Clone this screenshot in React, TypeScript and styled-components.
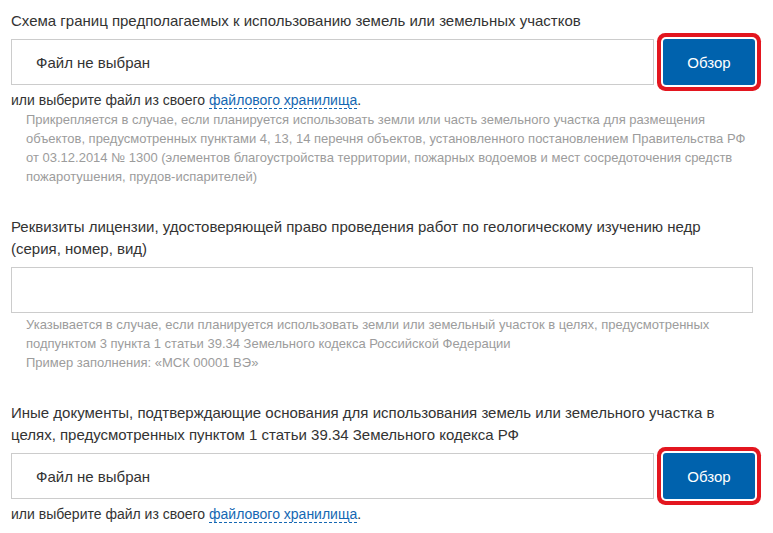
import React from "react";
import styled, { createGlobalStyle } from "styled-components";

const GlobalStyle = createGlobalStyle`
  html, body {
    margin: 0;
    padding: 0;
    background: #ffffff;
  }
  body {
    font-family: "Liberation Sans", Arial, sans-serif;
    color: #333333;
  }
`;

const Page = styled.div`
  width: 744px;
  padding: 10px 0 0 11px;
  display: flex;
  flex-direction: column;
  gap: 30px;
`;

const Field = styled.section`
  display: flex;
  flex-direction: column;
`;

const Label = styled.div`
  font-size: 15px;
  line-height: 22px;
  color: #333333;
`;

const FileRow = styled.div`
  margin-top: 7px;
  display: flex;
  align-items: stretch;
  gap: 9px;
  height: 46px;
`;

const FileBox = styled.div`
  flex: 1;
  box-sizing: border-box;
  border: 1px solid #cccccc;
  display: flex;
  align-items: center;
  padding-left: 24px;
  font-size: 15px;
  color: #333333;
`;

const BrowseButton = styled.button<{ $highlight?: boolean }>`
  width: 92px;
  height: 46px;
  border: none;
  border-radius: 3px;
  background: #0062ad;
  color: #ffffff;
  font-family: "Liberation Sans", Arial, sans-serif;
  font-size: 15px;
  cursor: pointer;
  box-shadow: ${(p) =>
    p.$highlight ? "0 0 0 2px #ffffff, 0 0 0 6px #e3161f" : "none"};
`;

const StorageNote = styled.div`
  margin-top: 5px;
  font-size: 14px;
  line-height: 20px;
  color: #333333;
`;

const StorageLink = styled.a`
  color: #1467b3;
  text-decoration: none;
  border-bottom: 1px dashed #1467b3;
`;

const Hint = styled.div<{ $gap?: number }>`
  margin-top: ${(p) => p.$gap ?? 0}px;
  padding-left: 15px;
  font-size: 13px;
  line-height: 19px;
  color: #9c9c9c;
`;

const TextInput = styled.input`
  margin-top: 7px;
  box-sizing: border-box;
  width: calc(100% - 2px);
  height: 46px;
  border: 1px solid #cccccc;
  outline: none;
  font-family: "Liberation Sans", Arial, sans-serif;
  font-size: 15px;
  padding: 0 24px;
`;

const FileField: React.FC = () => (
  <>
    <FileRow>
      <FileBox>Файл не выбран</FileBox>
      <BrowseButton $highlight>Обзор</BrowseButton>
    </FileRow>
    <StorageNote>
      или выберите файл из своего <StorageLink href="#">файлового хранилища</StorageLink>.
    </StorageNote>
  </>
);

export default function App() {
  return (
    <>
      <GlobalStyle />
      <Page>
        <Field>
          <Label>Схема границ предполагаемых к использованию земель или земельных участков</Label>
          <FileField />
          <Hint>
            Прикрепляется в случае, если планируется использовать земли или часть земельного участка для размещения
            <br />
            объектов, предусмотренных пунктами 4, 13, 14 перечня объектов, установленного постановлением Правительства РФ
            <br />
            от 03.12.2014 № 1300 (элементов благоустройства территории, пожарных водоемов и мест сосредоточения средств
            <br />
            пожаротушения, прудов-испарителей)
          </Hint>
        </Field>

        <Field>
          <Label>
            Реквизиты лицензии, удостоверяющей право проведения работ по геологическому изучению недр
            <br />
            (серия, номер, вид)
          </Label>
          <TextInput type="text" />
          <Hint $gap={2}>
            Указывается в случае, если планируется использовать земли или земельный участок в целях, предусмотренных
            <br />
            подпунктом 3 пункта 1 статьи 39.34 Земельного кодекса Российской Федерации
            <br />
            Пример заполнения: «МСК 00001 ВЭ»
          </Hint>
        </Field>

        <Field>
          <Label>
            Иные документы, подтверждающие основания для использования земель или земельного участка в
            <br />
            целях, предусмотренных пунктом 1 статьи 39.34 Земельного кодекса РФ
          </Label>
          <FileField />
        </Field>
      </Page>
    </>
  );
}
